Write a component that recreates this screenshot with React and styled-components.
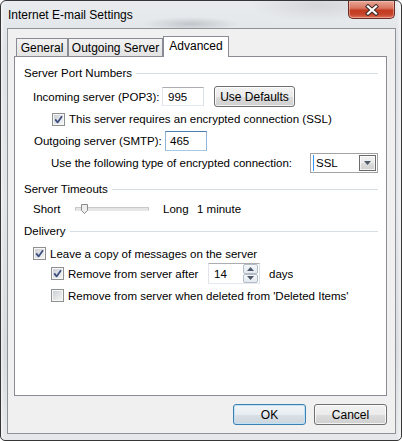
import React from "react";
import styled, { createGlobalStyle } from "styled-components";

const GlobalStyle = createGlobalStyle`
  html, body { margin: 0; padding: 0; background: #ffffff; }
  body {
    font-family: "Liberation Sans", Arial, sans-serif;
    font-size: 11.5px;
    color: #000;
  }
  *, *::before, *::after { box-sizing: border-box; }
`;

const Window = styled.div`
  width: 402px;
  height: 441px;
  display: flex;
  flex-direction: column;
  border: 1px solid #363636;
  border-radius: 6px 6px 5px 5px;
  overflow: hidden;
  background:
    linear-gradient(90deg, rgba(255,255,255,0.6) 0, rgba(255,255,255,0) 3px, rgba(255,255,255,0) 396px, rgba(255,255,255,0.55) 400px),
    linear-gradient(180deg, #e9ecef 0%, #dfe2e6 12%, #e3e6e9 45%, #d9dcdf 80%, #e6e8ea 100%);
`;

const TitleBar = styled.div`
  height: 27px;
  flex: none;
  display: flex;
  align-items: flex-start;
  background:
    radial-gradient(ellipse 48px 7px at 190px 23px, rgba(105,110,118,0.28), rgba(105,110,118,0) 100%),
    radial-gradient(ellipse 70px 16px at 318px 4px, rgba(140,140,140,0.22), rgba(140,140,140,0) 100%);
`;

const Title = styled.span`
  height: 27px;
  display: flex;
  align-items: center;
  padding-left: 7px;
  font-size: 12px;
  color: #000;
`;

const CloseButton = styled.div`
  margin-left: auto;
  margin-right: 6px;
  width: 47px;
  height: 18px;
  border: 1px solid #6a2b22;
  border-top: none;
  border-radius: 0 0 5px 5px;
  background: linear-gradient(180deg, #e8a797 0%, #d97560 42%, #c23a20 55%, #c7452c 80%, #de7661 100%);
  box-shadow: inset 0 0 0 1px rgba(255, 210, 200, 0.45);
  display: flex;
  align-items: center;
  justify-content: center;
`;

const Client = styled.div`
  flex: 1;
  margin: 0 5px 6px 6px;
  border: 1px solid #8f9297;
  background: #f0f0f0;
  padding: 7px 8px 8px 6px;
  display: flex;
  flex-direction: column;
`;

const TabStrip = styled.div`
  height: 20px;
  display: flex;
  align-items: flex-end;
  padding-left: 2px;
`;

const Tab = styled.div`
  position: relative;
  width: ${(p) => p.$w}px;
  height: ${(p) => (p.$active ? 21 : 18)}px;
  margin-bottom: ${(p) => (p.$active ? -1 : 0)}px;
  z-index: ${(p) => (p.$active ? 1 : 0)};
  border: 1px solid #898c95;
  border-bottom: none;
  background: ${(p) =>
    p.$active ? "#ffffff" : "linear-gradient(180deg, #f3f3f3 0%, #ebebeb 50%, #e3e3e3 100%)"};
  display: flex;
  align-items: center;
  justify-content: center;
  padding-bottom: ${(p) => (p.$active ? 2 : 0)}px;
  font-size: 12px;
`;

const Panel = styled.div`
  height: 340px;
  flex: none;
  border: 1px solid #898c95;
  background: #ffffff;
  padding: 0 8px 0 9px;
  display: flex;
  flex-direction: column;
`;

const GroupHeader = styled.div`
  height: 16px;
  margin-top: ${(p) => p.$mt}px;
  display: flex;
  align-items: center;
  white-space: nowrap;
  &::after {
    content: "";
    flex: 1;
    height: 1px;
    margin-left: 4px;
    background: #d5dfe5;
  }
`;

const Row = styled.div`
  height: ${(p) => p.$h}px;
  margin-top: ${(p) => p.$mt}px;
  padding-left: ${(p) => p.$indent}px;
  display: flex;
  align-items: center;
  white-space: nowrap;
`;

const Label = styled.span`
  width: ${(p) => (p.$w ? `${p.$w}px` : "auto")};
  margin-left: ${(p) => p.$ml || 0}px;
  flex: none;
`;

const TextBox = styled.div`
  width: ${(p) => p.$w}px;
  height: ${(p) => p.$h}px;
  flex: none;
  border: 1px solid;
  border-color: ${(p) =>
    p.$focused ? "#4a7fb3 #8fb3d6 #a9c8e4 #8fb3d6" : "#abadb3 #dbdfe6 #e3e9ef #e2e3ea"};
  background: #ffffff;
  display: flex;
  align-items: center;
  padding-left: ${(p) => p.$pl}px;
`;

const PushButton = styled.div`
  width: ${(p) => p.$w}px;
  height: 21px;
  flex: none;
  margin-left: ${(p) => p.$ml || 0}px;
  border: 1px solid ${(p) => (p.$default ? "#3c7fb1" : "#707070")};
  border-radius: 3px;
  background: ${(p) =>
    p.$default
      ? "linear-gradient(180deg, #f1f5f8 0%, #e8edf1 50%, #d9e0e6 50%, #ced6dd 100%)"
      : "linear-gradient(180deg, #f2f2f2 0%, #ebebeb 50%, #dddddd 50%, #cfcfcf 100%)"};
  box-shadow: inset 0 0 0 1px ${(p) => (p.$default ? "#bfe2f7" : "rgba(255,255,255,0.75)")};
  display: flex;
  align-items: center;
  justify-content: center;
  font-size: 12px;
`;

const CheckBox = styled.span`
  width: 13px;
  height: 13px;
  flex: none;
  border: 1px solid #8e8f8f;
  background: linear-gradient(135deg, #c6cad0 0%, #e6e7e9 60%, #f6f6f6 100%);
  box-shadow: inset 0 0 0 1px #f7f7f7;
  display: flex;
  align-items: center;
  justify-content: center;
`;

const CheckLabel = styled.span`
  margin-left: 4px;
  width: ${(p) => (p.$w ? `${p.$w}px` : "auto")};
  flex: none;
`;

const Select = styled.div`
  margin-left: auto;
  width: 68px;
  height: 20px;
  flex: none;
  border: 1px solid #a3a3a3;
  background: #ffffff;
  display: flex;
  align-items: center;
  padding: 1px 1px 1px 1px;
`;

const Caret = styled.span`
  width: 1px;
  height: 16px;
  margin-left: 1px;
  background: #3399ff;
`;

const SelectText = styled.span`
  flex: 1;
  padding-left: 2px;
`;

const DropButton = styled.span`
  width: 17px;
  height: 16px;
  border: 1px solid #6b6b6b;
  background: linear-gradient(180deg, #f2f2f2 0%, #ebebeb 50%, #dddddd 50%, #cfcfcf 100%);
  box-shadow: inset 0 0 0 1px rgba(255,255,255,0.7);
  display: flex;
  align-items: center;
  justify-content: center;
`;

const Slider = styled.div`
  position: relative;
  width: 74px;
  height: 18px;
  flex: none;
  display: flex;
  align-items: center;
`;

const Track = styled.div`
  width: 100%;
  height: 4px;
  border: 1px solid #c9c9c9;
  border-bottom-color: #e9e9e9;
  background: #e4e6e6;
`;

const Thumb = styled.svg`
  position: absolute;
  left: 6px;
  top: 4px;
`;

const SpinBox = styled.div`
  width: 52px;
  height: 21px;
  flex: none;
  border: 1px solid;
  border-color: #abadb3 #dbdfe6 #e3e9ef #e2e3ea;
  background: #ffffff;
  display: flex;
`;

const SpinValue = styled.span`
  flex: 1;
  display: flex;
  align-items: center;
  padding-left: 5px;
`;

const SpinButtons = styled.div`
  width: 16px;
  display: flex;
  flex-direction: column;
  padding: 0 1px 0 0;
`;

const SpinArrow = styled.div`
  flex: 1;
  border: 1px solid #b4bcc6;
  border-radius: 2px;
  background: linear-gradient(180deg, #f4f7fa 0%, #e3e9ef 100%);
  display: flex;
  align-items: center;
  justify-content: center;
`;

const ButtonRow = styled.div`
  margin-top: 8px;
  display: flex;
  justify-content: flex-end;
`;

const CheckMark = () => (
  <svg width="9" height="9" viewBox="0 0 9 9">
    <path d="M1.2 4.4 L3.6 7.4 L8 1.2" fill="none" stroke="#3b4c80" strokeWidth="1.7" strokeLinejoin="round" />
  </svg>
);

const Check = ({ checked }) => <CheckBox>{checked ? <CheckMark /> : null}</CheckBox>;

const Triangle = ({ up }) => (
  <svg width="7" height="4" viewBox="0 0 7 4">
    <path d={up ? "M0 4 L3.5 0 L7 4 Z" : "M0 0 L7 0 L3.5 4 Z"} fill={up ? "#4e5a6b" : "#4e5a6b"} />
  </svg>
);

export default function App() {
  return (
    <>
      <GlobalStyle />
      <Window>
        <TitleBar>
          <Title>Internet E-mail Settings</Title>
          <CloseButton>
            <svg width="14" height="12" viewBox="0 0 14 12">
              <path d="M3 2.5 L11 9.5 M11 2.5 L3 9.5" stroke="#3d2c2a" strokeWidth="4.2" strokeLinecap="square" />
              <path d="M3 2.5 L11 9.5 M11 2.5 L3 9.5" stroke="#ffffff" strokeWidth="2.2" strokeLinecap="square" />
            </svg>
          </CloseButton>
        </TitleBar>
        <Client>
          <TabStrip>
            <Tab $w={52}>General</Tab>
            <Tab $w={95}>Outgoing Server</Tab>
            <Tab $w={66} $active>Advanced</Tab>
          </TabStrip>
          <Panel>
            <GroupHeader $mt={8}>Server Port Numbers</GroupHeader>
            <Row $h={21} $mt={5} $indent={9}>
              <Label $w={129}>Incoming server (POP3):</Label>
              <TextBox $w={42} $h={19} $pl={5}>995</TextBox>
              <PushButton $w={81} $ml={10}>Use Defaults</PushButton>
            </Row>
            <Row $h={14} $mt={5} $indent={28}>
              <Check checked />
              <CheckLabel>This server requires an encrypted connection (SSL)</CheckLabel>
            </Row>
            <Row $h={21} $mt={4} $indent={10}>
              <Label $w={131}>Outgoing server (SMTP):</Label>
              <TextBox $w={42} $h={20} $pl={4} $focused>465</TextBox>
            </Row>
            <Row $h={20} $mt={2} $indent={27}>
              <Label>Use the following type of encrypted connection:</Label>
              <Select>
                <Caret />
                <SelectText>SSL</SelectText>
                <DropButton>
                  <Triangle />
                </DropButton>
              </Select>
            </Row>
            <GroupHeader $mt={8}>Server Timeouts</GroupHeader>
            <Row $h={18} $mt={3} $indent={9}>
              <Label $w={42}>Short</Label>
              <Slider>
                <Track />
                <Thumb width="7" height="10" viewBox="0 0 7 10">
                  <path d="M0.5 0.5 H6.5 V6.5 L3.5 9.5 L0.5 6.5 Z" fill="#eeeeee" stroke="#8c8c8c" strokeWidth="1" />
                </Thumb>
              </Slider>
              <Label $w={34} $ml={14}>Long</Label>
              <Label>1 minute</Label>
            </Row>
            <GroupHeader $mt={5}>Delivery</GroupHeader>
            <Row $h={15} $mt={7} $indent={9}>
              <Check checked />
              <CheckLabel>Leave a copy of messages on the server</CheckLabel>
            </Row>
            <Row $h={21} $mt={2} $indent={27}>
              <Check checked />
              <CheckLabel $w={140}>Remove from server after</CheckLabel>
              <SpinBox>
                <SpinValue>14</SpinValue>
                <SpinButtons>
                  <SpinArrow>
                    <Triangle up />
                  </SpinArrow>
                  <SpinArrow>
                    <Triangle />
                  </SpinArrow>
                </SpinButtons>
              </SpinBox>
              <Label $ml={9}>days</Label>
            </Row>
            <Row $h={15} $mt={4} $indent={27}>
              <Check />
              <CheckLabel>Remove from server when deleted from 'Deleted Items'</CheckLabel>
            </Row>
          </Panel>
          <ButtonRow>
            <PushButton $w={73} $default>OK</PushButton>
            <PushButton $w={73} $ml={8}>Cancel</PushButton>
          </ButtonRow>
        </Client>
      </Window>
    </>
  );
}
